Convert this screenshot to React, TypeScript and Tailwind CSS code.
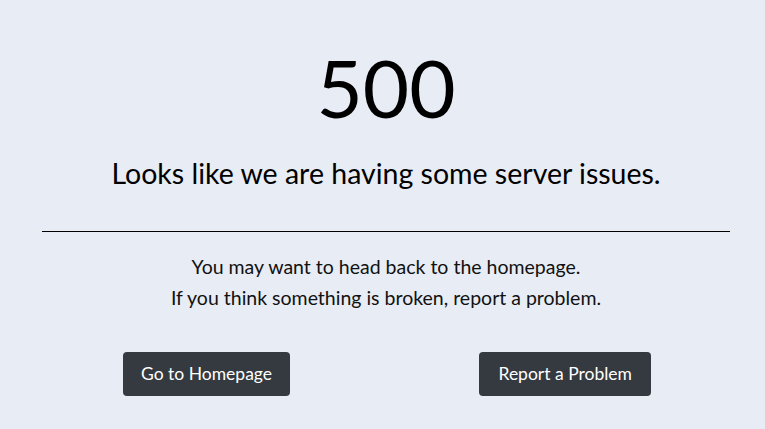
export default function App() {
  return (
    <div
      className="min-h-screen w-full bg-[#e8ecf4] text-black"
      style={{ fontFamily: "Lato, 'Noto Sans', sans-serif" }}
    >
      <div className="flex flex-col items-center pl-[42px] pr-[35px] pt-[47px]">
        <h1 className="text-[80px] leading-none font-normal">500</h1>
        <h2 className="mt-[29px] text-[28.5px] leading-tight font-normal">
          Looks like we are having some server issues.
        </h2>
        <hr className="mt-[39px] w-full border-t border-black" />
        <div className="mt-[19px] text-center text-[19.5px] leading-[31px] text-[#111]">
          <p>You may want to head back to the homepage.</p>
          <p>If you think something is broken, report a problem.</p>
        </div>
        <div className="mt-[39px] flex w-full justify-between pl-[81px] pr-[79px]">
          <button className="h-[44px] rounded-[4px] bg-[#343a40] px-[18px] text-[17.5px] text-white">
            Go to Homepage
          </button>
          <button className="h-[44px] rounded-[4px] bg-[#343a40] px-[19px] text-[17.5px] text-white">
            Report a Problem
          </button>
        </div>
      </div>
    </div>
  );
}
